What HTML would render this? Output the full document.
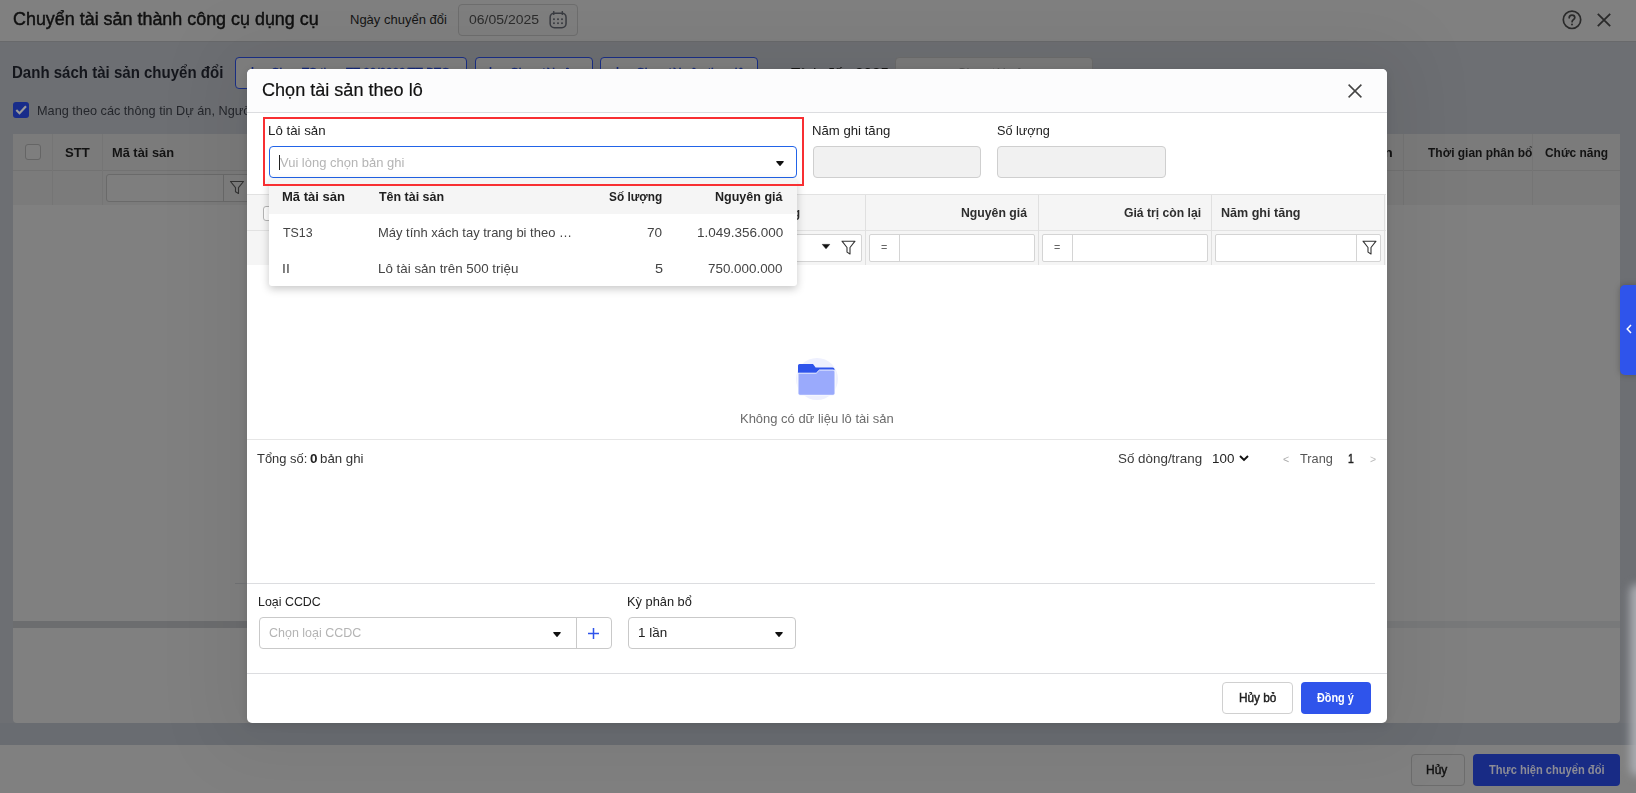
<!DOCTYPE html>
<html lang="vi">
<head>
<meta charset="utf-8">
<title>Chuyển tài sản thành công cụ dụng cụ</title>
<style>
html,body{margin:0;padding:0;}
body{width:1636px;height:793px;overflow:hidden;background:#6d6f73;font-family:"Liberation Sans",sans-serif;}
#root{position:relative;width:1636px;height:793px;overflow:hidden;background:#6d6f73;}
.a{position:absolute;box-sizing:border-box;}
.t{position:absolute;white-space:nowrap;transform-origin:0 50%;font-family:"Liberation Sans",sans-serif;}
svg{position:absolute;overflow:visible;}
</style>
</head>
<body>
<div id="root">

<!-- ================= dimmed background page ================= -->
<div class="a" style="left:0;top:0;width:1636px;height:41px;background:#808080;"></div>
<div class="a" style="left:0;top:41px;width:1636px;height:1px;background:#68696b;"></div>
<div class="a" style="left:0;top:45px;width:1636px;height:1px;background:#6d6f72;"></div>
<!-- date input -->
<div class="a" style="left:458px;top:4px;width:120px;height:32px;border:1px solid #6e6e6e;border-radius:4px;background:#7f7f7f;"></div>
<svg style="left:549px;top:10px;" width="19" height="19" viewBox="0 0 19 19" fill="none" stroke="#3a3c42" stroke-width="1.5">
<rect x="1.15" y="3.15" width="15.9" height="14.6" rx="4.2"/><path d="M4.75 0.9v4.2M13.3 0.9v4.2" stroke-width="1.3"/>
<g stroke="none" fill="#3a3c42"><rect x="4.1" y="8.35" width="1.7" height="1.7"/><rect x="8.15" y="8.35" width="1.7" height="1.7"/><rect x="12.15" y="8.35" width="1.7" height="1.7"/><rect x="4.1" y="12.35" width="1.7" height="1.7"/><rect x="8.15" y="12.35" width="1.7" height="1.7"/><rect x="12.15" y="12.35" width="1.7" height="1.7"/></g>
</svg>
<!-- help + close -->
<svg style="left:1562px;top:10px;" width="20" height="20" viewBox="0 0 20 20" fill="none" stroke="#2a2a2a" stroke-width="1.7">
<circle cx="10" cy="9.8" r="8.7"/><path d="M7.2 7.8c0-1.6 1.2-2.7 2.8-2.7s2.8 1 2.8 2.5c0 2-2.7 2.1-2.7 4.1" stroke-linecap="round"/><circle cx="10" cy="14.6" r="1" fill="#2a2a2a" stroke="none"/>
</svg>
<svg style="left:1597px;top:13px;" width="14" height="14" viewBox="0 0 14 14" fill="none" stroke="#2a2a2a" stroke-width="1.8"><path d="M0.8 0.8L13.2 13.2M13.2 0.8L0.8 13.2"/></svg>

<!-- toolbar buttons -->
<div class="a" style="left:235px;top:57px;width:232px;height:32px;border:1px solid #1a2f86;border-radius:4px;background:#808080;"></div>
<div class="a" style="left:475px;top:57px;width:118px;height:32px;border:1px solid #1a2f86;border-radius:4px;background:#808080;"></div>
<div class="a" style="left:600px;top:57px;width:158px;height:32px;border:1px solid #1a2f86;border-radius:4px;background:#808080;"></div>
<div class="a" style="left:895px;top:57px;width:198px;height:32px;border:1px solid #6c6c6c;border-radius:4px;background:#7b7b7b;"></div>
<!-- checkbox -->
<div class="a" style="left:13px;top:102px;width:16px;height:16px;border-radius:3px;background:#182c8a;"></div>
<svg style="left:13px;top:102px;" width="16" height="16" viewBox="0 0 16 16" fill="none" stroke="#9a9a9a" stroke-width="2.1"><path d="M3.3 8l3.2 3.2L13 4.2"/></svg>

<!-- table panel -->
<div class="a" style="left:13px;top:134px;width:1607px;height:487px;background:#808080;"></div>
<div class="a" style="left:13px;top:134px;width:1607px;height:36px;background:#7b7b7b;"></div>
<div class="a" style="left:13px;top:170px;width:1607px;height:35px;background:#7b7b7b;"></div>
<div class="a" style="left:13px;top:170px;width:1607px;height:1px;background:#727272;"></div>
<div class="a" style="left:52px;top:134px;width:1px;height:71px;background:#757575;"></div>
<div class="a" style="left:102px;top:134px;width:1px;height:71px;background:#757575;"></div>
<div class="a" style="left:1403px;top:134px;width:1px;height:71px;background:#757575;"></div>
<div class="a" style="left:1532px;top:134px;width:1px;height:71px;background:#757575;"></div>
<div class="a" style="left:25px;top:144px;width:16px;height:16px;border:1px solid #656565;border-radius:3px;background:#7e7e7e;"></div>
<div class="a" style="left:106px;top:174px;width:150px;height:28px;border:1px solid #6a6a6a;border-radius:3px;background:#7e7e7e;"></div>
<div class="a" style="left:223px;top:174px;width:1px;height:28px;background:#6a6a6a;"></div>
<svg style="left:229px;top:180px;" width="16" height="16" viewBox="0 0 16 16" fill="none" stroke="#333" stroke-width="1.1"><path d="M1.5 1.5h13l-5 6.2v5.8l-3-1.8v-4z" stroke-linejoin="round"/></svg>
<!-- dark bar + lower panel -->
<div class="a" style="left:13px;top:621px;width:1607px;height:7px;background:#78797a;"></div>
<div class="a" style="left:13px;top:621px;width:800px;height:7px;background:#6c6d6f;"></div>
<div class="a" style="left:13px;top:628px;width:1607px;height:95px;background:#808080;border-radius:0 0 4px 4px;"></div>
<div class="a" style="left:0;top:723px;width:1636px;height:22px;background:#696c71;"></div>
<!-- bottom bar -->
<div class="a" style="left:0;top:745px;width:1636px;height:48px;background:#808080;"></div>
<div class="a" style="left:1410.5px;top:754px;width:54px;height:32px;border:1px solid #6c6c6c;border-radius:4px;background:#808080;"></div>
<div class="a" style="left:1473px;top:754px;width:147px;height:32px;border-radius:4px;background:#182b85;"></div>
<!-- right glow -->
<div class="a" style="left:1630px;top:584px;width:16px;height:192px;background:#a9abb0;border-radius:8px;filter:blur(4px);"></div>
<!-- side tab -->
<div class="a" style="left:1620px;top:285px;width:20px;height:90px;border-radius:5px;background:#2f54eb;box-shadow:0 0 6px rgba(0,0,0,.25);"></div>
<svg style="left:1626px;top:324px;" width="6" height="10" viewBox="0 0 6 10" fill="none" stroke="#fff" stroke-width="1.5"><path d="M5 1L1.2 5 5 9"/></svg>

<span class="t" id="b_title" style="left:13.01px;top:7.00px;font-size:18px;line-height:25px;font-weight:normal;color:#101010;-webkit-text-stroke:0.45px #101010;transform:scaleX(0.9950);">Chuyển tài sản thành công cụ dụng cụ</span>
<span class="t" id="b_ngay" style="left:350.00px;top:10.50px;font-size:13px;line-height:18px;font-weight:normal;color:#151515;">Ngày chuyển đổi</span>
<span class="t" id="b_date" style="left:469.01px;top:10.50px;font-size:13px;line-height:18px;font-weight:normal;color:#2c2c2c;transform:scaleX(1.0764);">06/05/2025</span>
<span class="t" id="b_ds" style="left:12.00px;top:61.50px;font-size:16px;line-height:22px;font-weight:bold;color:#14161c;transform:scaleX(0.9395);">Danh sách tài sản chuyển đổi</span>
<span class="t" id="b_btn1" style="left:270.71px;top:64.00px;font-size:13px;line-height:18px;font-weight:normal;color:#162a7c;-webkit-text-stroke:0.45px #162a7c;transform:scaleX(0.8986);">Chọn TS theo TT 23/2023/TT-BTC</span>
<span class="t" id="b_btn2" style="left:509.69px;top:64.00px;font-size:13px;line-height:18px;font-weight:normal;color:#162a7c;-webkit-text-stroke:0.45px #162a7c;transform:scaleX(0.9264);">Chọn tài sản</span>
<span class="t" id="b_btn3" style="left:635.68px;top:64.00px;font-size:13px;line-height:18px;font-weight:normal;color:#162a7c;-webkit-text-stroke:0.45px #162a7c;transform:scaleX(0.9364);">Chọn tài sản theo lô</span>
<span class="t" id="b_tinh" style="left:790.78px;top:64.00px;font-size:13px;line-height:18px;font-weight:normal;color:#151515;transform:scaleX(1.1668);">Tính đến 2025</span>
<span class="t" id="b_ph" style="left:957.40px;top:64.00px;font-size:13px;line-height:18px;font-weight:normal;color:#555;transform:scaleX(1.0035);">Chọn tài sản</span>
<span class="t" id="b_mang" style="left:36.70px;top:101.50px;font-size:13px;line-height:18px;font-weight:normal;color:#24262b;transform:scaleX(0.9770);">Mang theo các thông tin Dự án, Ngườ</span>
<span class="t" id="b_stt" style="left:64.83px;top:143.50px;font-size:13px;line-height:18px;font-weight:bold;color:#131313;transform:scaleX(1.0071);">STT</span>
<span class="t" id="b_ma" style="left:112.00px;top:143.50px;font-size:13px;line-height:18px;font-weight:bold;color:#131313;transform:scaleX(0.9861);">Mã tài sản</span>
<span class="t" id="b_dvt" style="left:1339.31px;top:143.50px;font-size:13px;line-height:18px;font-weight:bold;color:#131313;transform:scaleX(1.0666);">Số lượn</span>
<span class="t" id="b_tg" style="left:1427.99px;top:143.50px;font-size:13px;line-height:18px;font-weight:bold;color:#131313;transform:scaleX(0.9210);">Thời gian phân bổ</span>
<span class="t" id="b_cn" style="left:1545.10px;top:143.50px;font-size:13px;line-height:18px;font-weight:bold;color:#131313;transform:scaleX(0.9180);">Chức năng</span>
<span class="t" id="b_huy" style="left:1426.35px;top:760.70px;font-size:12.5px;line-height:18px;font-weight:normal;color:#131313;-webkit-text-stroke:0.45px #131313;transform:scaleX(0.9598);">Hủy</span>
<span class="t" id="b_thuc" style="left:1489.49px;top:760.70px;font-size:12.5px;line-height:18px;font-weight:bold;color:#8c8c96;transform:scaleX(0.8893);">Thực hiện chuyển đổi</span>
<!-- plus icons of toolbar buttons -->
<svg style="left:246.5px;top:67px;" width="11" height="11" viewBox="0 0 11 11" stroke="#162a7c" stroke-width="1.6"><path d="M5.5 0v11M0 5.5h11"/></svg>
<svg style="left:485px;top:67px;" width="11" height="11" viewBox="0 0 11 11" stroke="#162a7c" stroke-width="1.6"><path d="M5.5 0v11M0 5.5h11"/></svg>
<svg style="left:611.5px;top:67px;" width="11" height="11" viewBox="0 0 11 11" stroke="#162a7c" stroke-width="1.6"><path d="M5.5 0v11M0 5.5h11"/></svg>

<!-- ================= modal ================= -->
<div class="a" id="modal" style="left:247px;top:69px;width:1140px;height:654px;background:#fff;border-radius:5px;box-shadow:0 0 70px 30px rgba(0,0,0,.055),0 2px 8px rgba(0,0,0,.10);"></div>
<div class="a" style="left:247px;top:69px;width:1140px;height:43px;background:#fcfcfd;border-radius:5px 5px 0 0;"></div>
<div class="a" style="left:247px;top:112px;width:1140px;height:1px;background:#dcdde0;"></div>
<svg style="left:1348px;top:84px;" width="14" height="14" viewBox="0 0 14 14" fill="none" stroke="#444" stroke-width="1.5"><path d="M0.6 0.6L13.4 13.4M13.4 0.6L0.6 13.4"/></svg>

<!-- red highlight -->
<div class="a" style="left:263px;top:117px;width:541px;height:69px;border:2px solid #f82f32;"></div>
<!-- combo (focused) -->
<div class="a" style="left:269px;top:146px;width:528px;height:32px;border:1px solid #2264e8;border-radius:4px;background:#fff;"></div>
<div class="a" style="left:279px;top:155px;width:1px;height:15px;background:#222;"></div>
<svg style="left:776px;top:160.5px;" width="8" height="5" viewBox="0 0 8 5"><path d="M0.8 0.7h6.4L4 4.3z" fill="#111" stroke="#111" stroke-width="1.2" stroke-linejoin="round"/></svg>
<!-- disabled inputs -->
<div class="a" style="left:813px;top:146px;width:168px;height:32px;border:1px solid #cfcfcf;border-radius:4px;background:#f1f1f1;"></div>
<div class="a" style="left:997px;top:146px;width:169px;height:32px;border:1px solid #cfcfcf;border-radius:4px;background:#f1f1f1;"></div>

<!-- grid header / filter -->
<div class="a" style="left:247px;top:194px;width:1139px;height:1px;background:#e2e2e2;"></div>
<div class="a" style="left:247px;top:195px;width:1139px;height:35px;background:#f5f5f5;"></div>
<div class="a" style="left:247px;top:230px;width:1139px;height:1px;background:#e2e2e2;"></div>
<div class="a" style="left:247px;top:231px;width:1139px;height:34px;background:#f5f5f5;"></div>
<div class="a" style="left:865px;top:195px;width:1px;height:70px;background:#e0e0e0;"></div>
<div class="a" style="left:1038px;top:195px;width:1px;height:70px;background:#e0e0e0;"></div>
<div class="a" style="left:1211px;top:195px;width:1px;height:70px;background:#e0e0e0;"></div>
<div class="a" style="left:1384px;top:195px;width:1px;height:70px;background:#e0e0e0;"></div>
<div class="a" style="left:263px;top:206px;width:15px;height:15px;border:1px solid #b5b5b5;border-radius:3px;background:#fff;"></div>
<!-- filter boxes -->
<div class="a" style="left:700px;top:234px;width:162px;height:28px;border:1px solid #d4d4d4;border-radius:2px;background:#fff;"></div>
<svg style="left:822px;top:244px;" width="8" height="5" viewBox="0 0 8 5"><path d="M0.3 0.4h7.4L4 4.7z" fill="#111" stroke="#111" stroke-width="0.6" stroke-linejoin="round"/></svg>
<svg style="left:841px;top:240px;" width="15" height="16" viewBox="0 0 15 16" fill="none" stroke="#333" stroke-width="1.1"><path d="M1 1.2h13l-5 6.3v6.5l-3-1.9v-4.6z" stroke-linejoin="round"/></svg>
<div class="a" style="left:869px;top:234px;width:166px;height:28px;border:1px solid #d4d4d4;border-radius:2px;background:#fff;"></div>
<div class="a" style="left:899px;top:234px;width:1px;height:28px;background:#d4d4d4;"></div>
<div class="a" style="left:1042px;top:234px;width:166px;height:28px;border:1px solid #d4d4d4;border-radius:2px;background:#fff;"></div>
<div class="a" style="left:1072px;top:234px;width:1px;height:28px;background:#d4d4d4;"></div>
<div class="a" style="left:1215px;top:234px;width:166px;height:28px;border:1px solid #d4d4d4;border-radius:2px;background:#fff;"></div>
<div class="a" style="left:1356px;top:234px;width:1px;height:28px;background:#d4d4d4;"></div>
<svg style="left:1362px;top:240px;" width="15" height="16" viewBox="0 0 15 16" fill="none" stroke="#333" stroke-width="1.1"><path d="M1 1.2h13l-5 6.3v6.5l-3-1.9v-4.6z" stroke-linejoin="round"/></svg>

<!-- empty state -->
<div class="a" style="left:796px;top:358px;width:42px;height:42px;border-radius:21px;background:#eef0fe;"></div>
<svg style="left:798px;top:363px;" width="38" height="33" viewBox="0 0 38 33">
<path d="M1.5 1h13.5l2.6 3.6h16.9a2 2 0 0 1 2 2V12H0V2.5A1.5 1.5 0 0 1 1.500 1z" fill="#2f54eb"/>
<path d="M0 10.2h18.2l3.2-3.2h13.6a2 2 0 0 1 2 2V30.3a2 2 0 0 1-2 2H2a2 2 0 0 1-2-2z" fill="#9aaafc" stroke="#fff" stroke-width="0.9"/>
</svg>

<!-- pager -->
<div class="a" style="left:247px;top:439px;width:1140px;height:1px;background:#e6e6e6;"></div>
<svg style="left:1239px;top:455px;" width="10" height="7" viewBox="0 0 10 7" fill="none" stroke="#111" stroke-width="1.9"><path d="M1 1l4 4 4-4"/></svg>

<!-- bottom form -->
<div class="a" style="left:235px;top:583px;width:12px;height:1px;background:#6d6e70;"></div>
<div class="a" style="left:247px;top:583px;width:1128px;height:1px;background:#dcdde0;"></div>
<div class="a" style="left:259px;top:617px;width:353px;height:32px;border:1px solid #c9c9c9;border-radius:4px;background:#fff;"></div>
<div class="a" style="left:576px;top:617px;width:1px;height:32px;background:#c9c9c9;"></div>
<svg style="left:552.5px;top:631.5px;" width="8" height="5" viewBox="0 0 8 5"><path d="M0.8 0.7h6.4L4 4.3z" fill="#111" stroke="#111" stroke-width="1.2" stroke-linejoin="round"/></svg>
<svg style="left:588px;top:628px;" width="11" height="11" viewBox="0 0 11 11" stroke="#2f54eb" stroke-width="1.5"><path d="M5.5 0v11M0 5.5h11"/></svg>
<div class="a" style="left:628px;top:617px;width:168px;height:32px;border:1px solid #c9c9c9;border-radius:4px;background:#fff;"></div>
<svg style="left:774.5px;top:631.5px;" width="8" height="5" viewBox="0 0 8 5"><path d="M0.8 0.7h6.4L4 4.3z" fill="#111" stroke="#111" stroke-width="1.2" stroke-linejoin="round"/></svg>

<!-- footer -->
<div class="a" style="left:247px;top:673px;width:1140px;height:1px;background:#dcdde0;"></div>
<div class="a" style="left:1222px;top:682px;width:71px;height:32px;border:1px solid #d0d0d0;border-radius:4px;background:#fff;"></div>
<div class="a" style="left:1301px;top:682px;width:70px;height:32px;border-radius:4px;background:#2f54eb;"></div>

<span class="t" id="m_title" style="left:262.00px;top:77.50px;font-size:18px;line-height:25px;font-weight:normal;color:#111;-webkit-text-stroke:0.2px #111;transform:scaleX(1.0036);">Chọn tài sản theo lô</span>
<span class="t" id="m_lo" style="left:268.00px;top:121.50px;font-size:13px;line-height:18px;font-weight:normal;color:#212121;transform:scaleX(1.0207);">Lô tài sản</span>
<span class="t" id="m_ph" style="left:279.83px;top:153.50px;font-size:13px;line-height:18px;font-weight:normal;color:#b4b4b4;transform:scaleX(0.9977);">Vui lòng chọn bản ghi</span>
<span class="t" id="m_nam" style="left:812.00px;top:121.50px;font-size:13px;line-height:18px;font-weight:normal;color:#212121;transform:scaleX(1.0122);">Năm ghi tăng</span>
<span class="t" id="m_sl" style="left:996.50px;top:121.50px;font-size:13px;line-height:18px;font-weight:normal;color:#212121;transform:scaleX(0.9747);">Số lượng</span>
<span class="t" id="g_sl" style="left:748.37px;top:203.50px;font-size:13px;line-height:18px;font-weight:bold;color:#2e2e2e;transform:scaleX(0.8926);">Số lượng</span>
<span class="t" id="g_ng" style="left:961.00px;top:203.50px;font-size:13px;line-height:18px;font-weight:bold;color:#2e2e2e;transform:scaleX(0.9420);">Nguyên giá</span>
<span class="t" id="g_gt" style="left:1123.60px;top:203.50px;font-size:13px;line-height:18px;font-weight:bold;color:#2e2e2e;transform:scaleX(0.9360);">Giá trị còn lại</span>
<span class="t" id="g_nam" style="left:1220.50px;top:203.50px;font-size:13px;line-height:18px;font-weight:bold;color:#2e2e2e;transform:scaleX(0.9653);">Năm ghi tăng</span>
<span class="t" id="g_eq1" style="left:881.35px;top:241.30px;font-size:10px;line-height:14px;font-weight:normal;color:#666;transform:scaleX(1.0780);">=</span>
<span class="t" id="g_eq2" style="left:1054.35px;top:241.30px;font-size:10px;line-height:14px;font-weight:normal;color:#666;transform:scaleX(1.0780);">=</span>
<span class="t" id="e_txt" style="left:739.50px;top:409.50px;font-size:13px;line-height:18px;font-weight:normal;color:#6b6b6b;transform:scaleX(0.9977);">Không có dữ liệu lô tài sản</span>
<span class="t" id="p_tong" style="left:257.22px;top:449.50px;font-size:13px;line-height:18px;font-weight:normal;color:#333;transform:scaleX(0.9927);">Tổng số:</span>
<span class="t" id="p_0" style="left:309.84px;top:449.50px;font-size:13px;line-height:18px;font-weight:bold;color:#222;transform:scaleX(1.0355);">0</span>
<span class="t" id="p_bg" style="left:319.70px;top:449.50px;font-size:13px;line-height:18px;font-weight:normal;color:#333;transform:scaleX(1.0205);">bản ghi</span>
<span class="t" id="p_sd" style="left:1117.60px;top:449.50px;font-size:13px;line-height:18px;font-weight:normal;color:#3a3a3a;transform:scaleX(1.0300);">Số dòng/trang</span>
<span class="t" id="p_100" style="left:1211.80px;top:449.50px;font-size:13px;line-height:18px;font-weight:normal;color:#222;transform:scaleX(1.0289);">100</span>
<span class="t" id="p_lt" style="left:1282.54px;top:451.50px;font-size:11px;line-height:15px;font-weight:normal;color:#aaa;transform:scaleX(0.9619);"><</span>
<span class="t" id="p_tr" style="left:1299.82px;top:449.50px;font-size:13px;line-height:18px;font-weight:normal;color:#555;transform:scaleX(0.9795);">Trang</span>
<span class="t" id="p_1" style="left:1348.16px;top:449.50px;font-size:13px;line-height:18px;font-weight:normal;color:#222;-webkit-text-stroke:0.45px #222;transform:scaleX(0.8000);">1</span>
<span class="t" id="p_gt" style="left:1370.27px;top:451.50px;font-size:11px;line-height:15px;font-weight:normal;color:#bcbcbc;transform:scaleX(0.9515);">></span>
<span class="t" id="f_loai" style="left:258.00px;top:592.50px;font-size:13px;line-height:18px;font-weight:normal;color:#212121;transform:scaleX(0.9554);">Loại CCDC</span>
<span class="t" id="f_ph" style="left:268.93px;top:623.50px;font-size:13px;line-height:18px;font-weight:normal;color:#b4b4b4;transform:scaleX(0.9604);">Chọn loại CCDC</span>
<span class="t" id="f_ky" style="left:627.00px;top:592.50px;font-size:13px;line-height:18px;font-weight:normal;color:#212121;transform:scaleX(0.9864);">Kỳ phân bổ</span>
<span class="t" id="f_1lan" style="left:638.00px;top:623.50px;font-size:13px;line-height:18px;font-weight:normal;color:#212121;transform:scaleX(1.0336);">1 lần</span>
<span class="t" id="f_huybo" style="left:1238.55px;top:688.70px;font-size:12.5px;line-height:18px;font-weight:normal;color:#212121;-webkit-text-stroke:0.45px #212121;transform:scaleX(0.9449);">Hủy bỏ</span>
<span class="t" id="f_dongy" style="left:1317.30px;top:688.70px;font-size:12.5px;line-height:18px;font-weight:bold;color:#fff;transform:scaleX(0.8677);">Đồng ý</span>

<!-- ================= dropdown ================= -->
<div class="a" style="left:269px;top:179px;width:528px;height:107px;background:#fff;border-radius:0 0 3px 3px;box-shadow:0 3px 8px rgba(0,0,0,.22);"></div>
<div class="a" style="left:269px;top:179px;width:528px;height:35px;background:#f5f5f5;"></div>
<!-- red border bottom drawn above dropdown -->
<div class="a" style="left:263px;top:184px;width:541px;height:2px;background:#f82f32;"></div>
<span class="t" id="d_ma" style="left:282.00px;top:188.00px;font-size:13px;line-height:18px;font-weight:bold;color:#212121;transform:scaleX(1.0024);">Mã tài sản</span>
<span class="t" id="d_ten" style="left:378.99px;top:188.00px;font-size:13px;line-height:18px;font-weight:bold;color:#212121;transform:scaleX(0.9578);">Tên tài sản</span>
<span class="t" id="d_sl" style="left:609.36px;top:188.00px;font-size:13px;line-height:18px;font-weight:bold;color:#212121;transform:scaleX(0.9101);">Số lượng</span>
<span class="t" id="d_ng" style="left:715.00px;top:188.00px;font-size:13px;line-height:18px;font-weight:bold;color:#212121;transform:scaleX(0.9638);">Nguyên giá</span>
<span class="t" id="d_r1a" style="left:282.84px;top:224.00px;font-size:13px;line-height:18px;font-weight:normal;color:#444;transform:scaleX(0.9544);">TS13</span>
<span class="t" id="d_r1b" style="left:378.00px;top:224.00px;font-size:13px;line-height:18px;font-weight:normal;color:#444;transform:scaleX(0.9976);">Máy tính xách tay trang bi theo …</span>
<span class="t" id="d_r1c" style="left:647.37px;top:224.00px;font-size:13px;line-height:18px;font-weight:normal;color:#444;transform:scaleX(1.0444);">70</span>
<span class="t" id="d_r1d" style="left:696.50px;top:224.00px;font-size:13px;line-height:18px;font-weight:normal;color:#444;transform:scaleX(1.0378);">1.049.356.000</span>
<span class="t" id="d_r2a" style="left:282.11px;top:260.00px;font-size:13px;line-height:18px;font-weight:normal;color:#444;transform:scaleX(1.0827);">II</span>
<span class="t" id="d_r2b" style="left:378.00px;top:260.00px;font-size:13px;line-height:18px;font-weight:normal;color:#444;transform:scaleX(1.0274);">Lô tài sản trên 500 triệu</span>
<span class="t" id="d_r2c" style="left:654.50px;top:260.00px;font-size:13px;line-height:18px;font-weight:normal;color:#444;transform:scaleX(1.1130);">5</span>
<span class="t" id="d_r2d" style="left:708.39px;top:260.00px;font-size:13px;line-height:18px;font-weight:normal;color:#444;transform:scaleX(1.0307);">750.000.000</span>

</div>
</body>
</html>
